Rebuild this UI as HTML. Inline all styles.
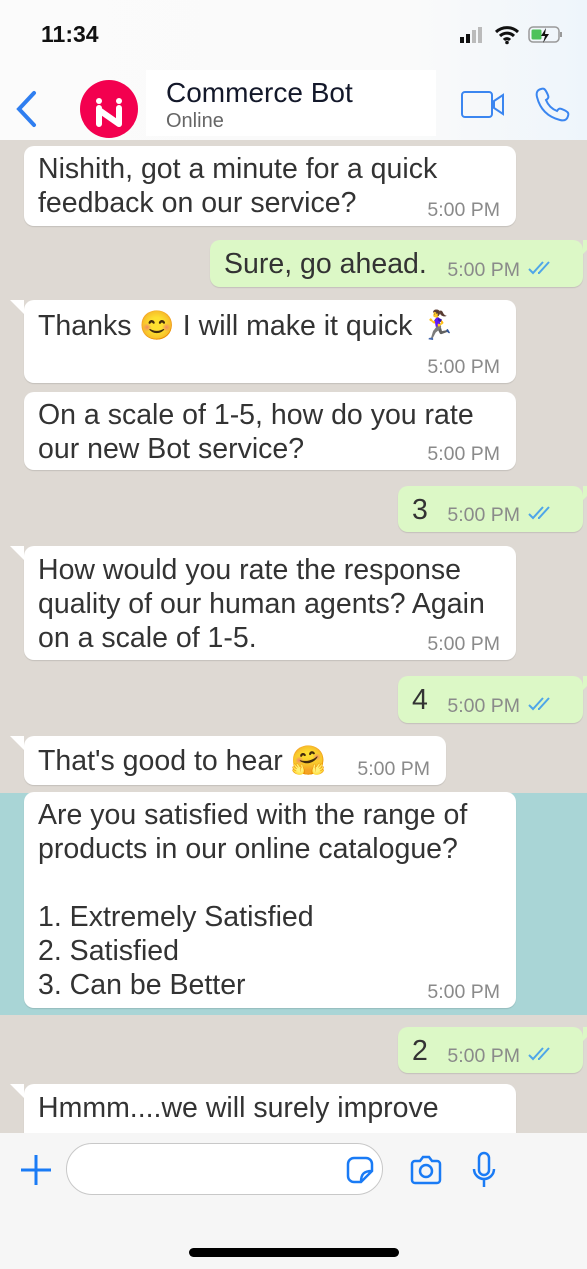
<!DOCTYPE html>
<html><head><meta charset="utf-8"><style>
*{margin:0;padding:0;box-sizing:border-box}
body{width:587px;height:1269px;overflow:hidden;position:relative;background:#ded9d3;font-family:"Liberation Sans",sans-serif;color:#333}
.band{position:absolute;left:0;top:793px;width:587px;height:222px;background:#a9d5d6}
.b{position:absolute;background:#fff;border-radius:10px;font-size:28.5px;line-height:34px;padding:7px 14px;box-shadow:0 1px 1px rgba(0,0,0,.12);white-space:nowrap}
.o{background:#dcf8c6}
.t{position:absolute;right:16px;bottom:6px;font-size:19.5px;line-height:20px;color:#8a8a8a}
.o .t{right:63px;bottom:7px}
.tick{position:absolute;right:28px;bottom:11px;width:28px;height:16px}
.tail{position:absolute;left:-14px;top:0;width:0;height:0;border-top:14px solid #fff;border-left:14px solid transparent}
.o .tail{left:auto;right:-14px;border-left:none;border-right:14px solid transparent;border-top-color:#dcf8c6}
.hdr{position:absolute;left:0;top:0;width:587px;height:140px;background:linear-gradient(90deg,#fbfbfb,#fafafa 70%,#eef5fb)}
.bot{position:absolute;left:0;top:1133px;width:587px;height:136px;background:#f6f6f6}
</style></head><body>
<div class="band"></div>

<div class="b" style="left:24px;top:146px;width:492px;height:80px;padding-top:6px">Nishith, got a minute for a quick<br>feedback on our service?<span class="t">5:00 PM</span></div>
<div class="b o" style="left:210px;top:240px;width:373px;height:47px;padding-left:14px">Sure, go ahead.<span class="t">5:00 PM</span><svg class="tick" viewBox="0 0 28 16"><path d="M2 9l4 4 10-11M11 13l1 0 10-11" stroke="#4fa6e8" stroke-width="2" fill="none"/></svg><div class="tail"></div></div>
<div class="b" style="left:24px;top:300px;width:492px;height:83px;padding-top:9px">Thanks 😊 I will make it quick 🏃‍♀️<span class="t">5:00 PM</span><div class="tail"></div></div>
<div class="b" style="left:24px;top:392px;width:492px;height:78px;padding-top:6px">On a scale of 1-5, how do you rate<br>our new Bot service?<span class="t">5:00 PM</span></div>
<div class="b o" style="left:398px;top:486px;width:185px;height:46px;padding-left:14px">3<span class="t">5:00 PM</span><svg class="tick" viewBox="0 0 28 16"><path d="M2 9l4 4 10-11M11 13l1 0 10-11" stroke="#4fa6e8" stroke-width="2" fill="none"/></svg><div class="tail"></div></div>
<div class="b" style="left:24px;top:546px;width:492px;height:114px;padding-top:7px">How would you rate the response<br>quality of our human agents? Again<br>on a scale of 1-5.<span class="t">5:00 PM</span><div class="tail"></div></div>
<div class="b o" style="left:398px;top:676px;width:185px;height:47px;padding-left:14px">4<span class="t">5:00 PM</span><svg class="tick" viewBox="0 0 28 16"><path d="M2 9l4 4 10-11M11 13l1 0 10-11" stroke="#4fa6e8" stroke-width="2" fill="none"/></svg><div class="tail"></div></div>
<div class="b" style="left:24px;top:736px;width:422px;height:49px;padding-top:8px">That's good to hear 🤗<span class="t">5:00 PM</span><div class="tail"></div></div>
<div class="b" style="left:24px;top:792px;width:492px;height:216px;padding-top:6px">Are you satisfied with the range of<br>products in our online catalogue?<br><br>1. Extremely Satisfied<br>2. Satisfied<br>3. Can be Better<span class="t">5:00 PM</span></div>
<div class="b o" style="left:398px;top:1027px;width:185px;height:46px;padding-left:14px">2<span class="t">5:00 PM</span><svg class="tick" viewBox="0 0 28 16"><path d="M2 9l4 4 10-11M11 13l1 0 10-11" stroke="#4fa6e8" stroke-width="2" fill="none"/></svg><div class="tail"></div></div>
<div class="b" style="left:24px;top:1084px;width:492px;height:80px;padding-top:7px">Hmmm....we will surely improve<div class="tail"></div></div>

<div class="hdr">
<div style="position:absolute;left:41px;top:21px;font-size:23px;font-weight:bold;color:#111">11:34</div>
<svg style="position:absolute;left:458px;top:26px" width="30" height="18"><rect x="2" y="11" width="4" height="6" fill="#111"/><rect x="8" y="8" width="4" height="9" fill="#111"/><rect x="14" y="4" width="4" height="13" fill="#bbb"/><rect x="20" y="1" width="4" height="16" fill="#bbb"/></svg>
<svg style="position:absolute;left:494px;top:25px" width="26" height="20" viewBox="0 0 26 20"><path d="M2 7a16 16 0 0 1 22 0M6 11a10 10 0 0 1 14 0M10 15a4 4 0 0 1 6 0" stroke="#111" stroke-width="3" fill="none"/><circle cx="13" cy="17.5" r="1.8" fill="#111"/></svg>
<svg style="position:absolute;left:528px;top:25px" width="36" height="20"><rect x="1" y="2" width="30" height="15" rx="4" fill="none" stroke="#999" stroke-width="1.5"/><rect x="3.5" y="4.5" width="10" height="10" rx="1.5" fill="#4cc25a"/><rect x="32" y="7" width="2" height="5" fill="#999"/><path d="M18 3l-5 8h4l-2 7 6-9h-4z" fill="#111"/></svg>
<svg style="position:absolute;left:14px;top:90px" width="24" height="38"><path d="M20 3L5 19l15 16" stroke="#2f7ef0" stroke-width="4" fill="none" stroke-linecap="round"/></svg>
<div style="position:absolute;left:146px;top:70px;width:290px;height:66px;background:#fff"></div>
<div style="position:absolute;left:80px;top:80px;width:58px;height:58px;border-radius:50%;background:#f3004f"></div>
<svg style="position:absolute;left:80px;top:80px" width="58" height="58"><circle cx="19" cy="21" r="3" fill="#fff"/><circle cx="39" cy="21" r="3" fill="#fff"/><path d="M19 28v16M19 30l20 14M39 28v16" stroke="#fff" stroke-width="6" stroke-linecap="round" fill="none"/></svg>
<div style="position:absolute;left:166px;top:77px;font-size:28px;color:#13182a">Commerce Bot</div>
<div style="position:absolute;left:166px;top:110px;font-size:20px;color:#666">Online</div>
<svg style="position:absolute;left:460px;top:90px" width="46" height="30"><rect x="2" y="2" width="30" height="25" rx="3" fill="none" stroke="#3b86f0" stroke-width="2"/><path d="M34 11l9-6v19l-9-6z" fill="none" stroke="#3b86f0" stroke-width="2"/></svg>
<svg style="position:absolute;left:533px;top:86px" width="40" height="38" viewBox="0 0 40 38"><path d="M8 3c3-1 4 0 6 4s2 5-1 7c2 5 6 9 11 11 2-3 3-3 7-1s5 3 4 6c-1 4-4 5-8 4C15 31 7 23 4 11 3 7 4 4 8 3z" fill="none" stroke="#3b86f0" stroke-width="2"/></svg>
</div>

<div class="bot">
<svg style="position:absolute;left:18px;top:18px" width="36" height="36"><path d="M18 4v30M3 19h30" stroke="#1a7bf5" stroke-width="3"/></svg>
<div style="position:absolute;left:66px;top:10px;width:317px;height:52px;border:1px solid #c8c8c8;border-radius:26px;background:#fff"></div>
<svg style="position:absolute;left:345px;top:22px" width="30" height="30"><path d="M27 16V9a6 6 0 0 0-6-6H9a6 6 0 0 0-6 6v12a6 6 0 0 0 6 6h7zM27 16c-8 0-11 3-11 11" fill="none" stroke="#1a7bf5" stroke-width="2.5"/></svg>
<svg style="position:absolute;left:409px;top:21px" width="34" height="32"><path d="M3 10a3 3 0 0 1 3-3h5l3-4h6l3 4h5a3 3 0 0 1 3 3v16a3 3 0 0 1-3 3H6a3 3 0 0 1-3-3z" fill="none" stroke="#1a7bf5" stroke-width="2.5"/><circle cx="17" cy="17" r="6" fill="none" stroke="#1a7bf5" stroke-width="2.5"/></svg>
<svg style="position:absolute;left:472px;top:18px" width="24" height="40"><rect x="7" y="2" width="10" height="22" rx="5" fill="none" stroke="#1a7bf5" stroke-width="2.5"/><path d="M2 18a10 10 0 0 0 20 0M12 28v8" fill="none" stroke="#1a7bf5" stroke-width="2.5"/></svg>
<div style="position:absolute;left:189px;top:115px;width:210px;height:9px;border-radius:5px;background:#000"></div>
</div>
</body></html>
